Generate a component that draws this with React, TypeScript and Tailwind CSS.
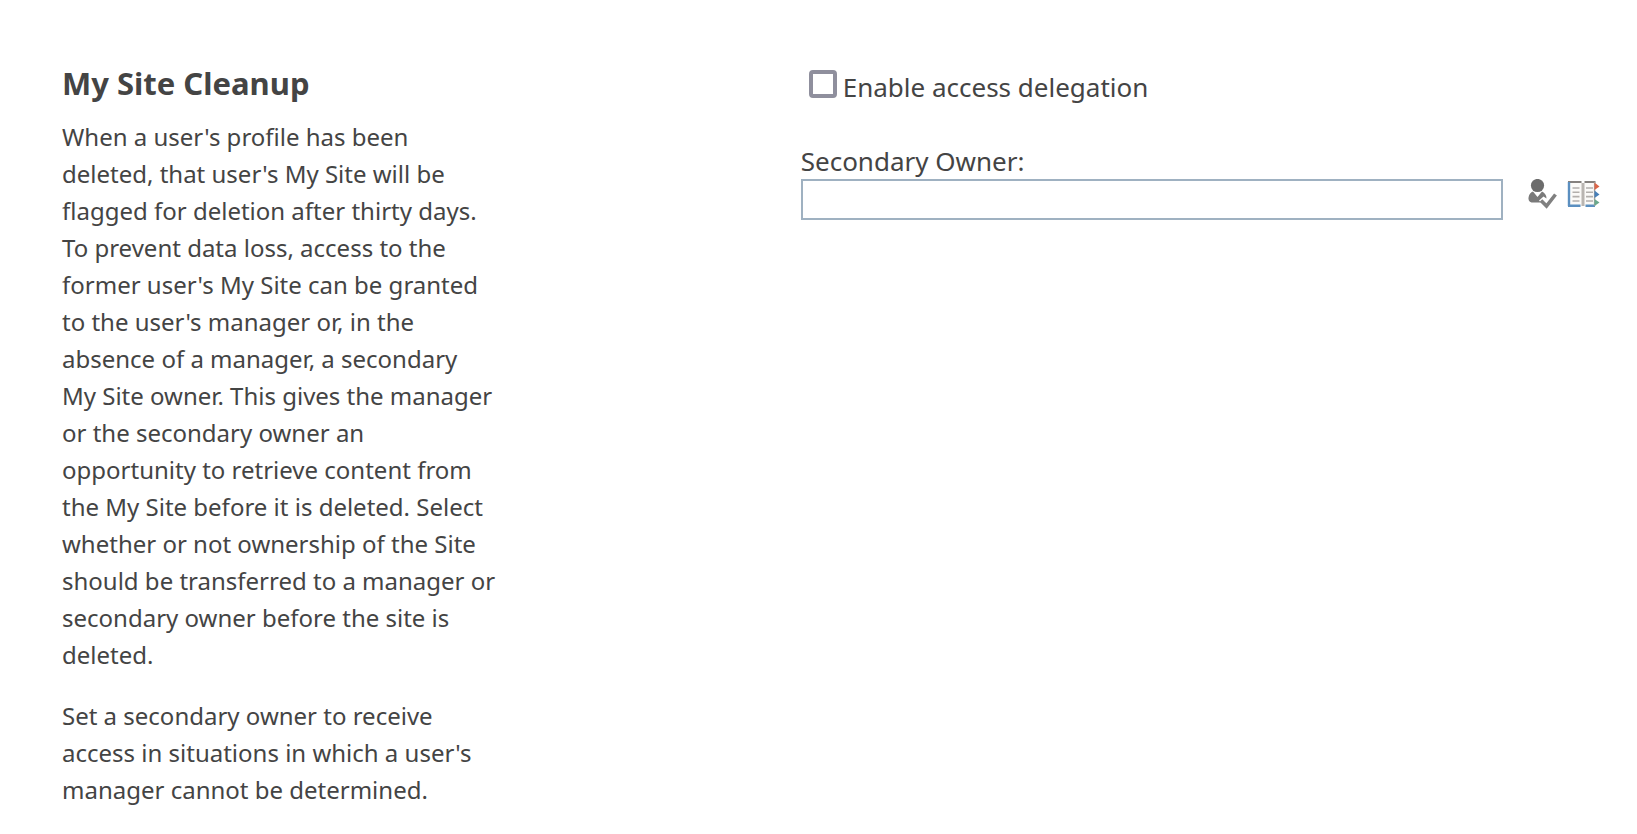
function CheckNamesIcon() {
  return (
    <svg viewBox="0 0 30 32" className="h-8 w-[30px]" aria-hidden="true">
      <circle cx="10.5" cy="6.5" r="6.6" fill="#6c6c6c" />
      <path d="M6 12.5 L10.5 18 L15 12.5 C18 14 19.6 16.5 19.5 19.5 L16.5 17.5 L12 21.5 L14 23.5 H4.5 C2 23 1 20.5 1.6 18 C2.2 15 3.7 13.2 6 12.5 Z" fill="#7a7a7a" />
      <path d="M14 21.5 L19.5 27 L28.5 15.5" fill="none" stroke="#808080" strokeWidth="3.6" />
    </svg>
  );
}

function AddressBookIcon() {
  return (
    <svg viewBox="0 0 34 30" className="h-[30px] w-[34px]" aria-hidden="true">
      <path d="M2 3 H14 L16.5 5 L19 3 H28 V27 H2 Z" fill="#fbfaf8" />
      <path d="M1 3 H14.5 M17.5 3 H28.5" stroke="#85817e" strokeWidth="2.2" />
      <path d="M16 4 V27" stroke="#b9b5b1" strokeWidth="3" />
      <path d="M2 3 V27 M1 26.8 H13.5 M18.5 26.8 H28" stroke="#5b8fc0" strokeWidth="2.4" />
      <path d="M27.6 3 V27" stroke="#a5a19e" strokeWidth="1.4" />
      <path
        d="M5.5 9 H12.5 M5.5 13.3 H12.5 M5.5 17.6 H12.5 M5.5 22 H12.5 M19 9 H26 M19 13.3 H26 M19 17.6 H26 M19 22 H26"
        stroke="#b3afac"
        strokeWidth="1.6"
      />
      <path d="M27.5 3.5 L32.5 7.5 L27.5 11 Z" fill="#dc6548" />
      <path d="M27.5 11.5 L32.5 15.5 L27.5 19 Z" fill="#477fb8" />
      <path d="M27.5 20 L32.5 23.5 L27.5 27 Z" fill="#69a98c" />
    </svg>
  );
}

export default function App() {
  return (
    <main className="grid min-h-screen grid-cols-[12fr_13fr] bg-white pt-15 pr-9 pl-[62px] font-['Noto_Sans',sans-serif] text-[#444444]">
      <section>
        <h1 className="text-[31px] leading-[46px] font-bold">My Site Cleanup</h1>
        <div className="flex max-w-[480px] flex-col gap-6 pt-3 text-[24px] leading-[37px]">
          <p>
            When a user's profile has been
            <br />
            deleted, that user's My Site will be
            <br />
            flagged for deletion after thirty days.
            <br />
            To prevent data loss, access to the
            <br />
            former user's My Site can be granted
            <br />
            to the user's manager or, in the
            <br />
            absence of a manager, a secondary
            <br />
            My Site owner. This gives the manager
            <br />
            or the secondary owner an
            <br />
            opportunity to retrieve content from
            <br />
            the My Site before it is deleted. Select
            <br />
            whether or not ownership of the Site
            <br />
            should be transferred to a manager or
            <br />
            secondary owner before the site is
            <br />
            deleted.
          </p>
          <p>
            Set a secondary owner to receive
            <br />
            access in situations in which a user's
            <br />
            manager cannot be determined.
          </p>
        </div>
      </section>

      <form className="text-[26px] leading-9">
        <div className="flex items-end gap-[6px] pt-[9px] pl-2">
          <input
            id="delegation"
            type="checkbox"
            className="mb-[7px] size-7 shrink-0 appearance-none rounded-[4px] border-4 border-[#8f8f9d] bg-white checked:bg-[#8f8f9d]"
          />
          <label htmlFor="delegation">Enable access delegation</label>
        </div>
        <label htmlFor="owner" className="mt-[38px] block">
          Secondary Owner:
        </label>
        <div className="flex items-start">
          <input
            id="owner"
            type="text"
            className="h-[41px] min-w-0 grow border-2 border-[#9fb1c1] bg-white px-2 outline-none"
          />
          <button type="button" aria-label="Check names" className="ml-6">
            <CheckNamesIcon />
          </button>
          <button type="button" aria-label="Browse" className="ml-[10px]">
            <AddressBookIcon />
          </button>
        </div>
      </form>
    </main>
  );
}
